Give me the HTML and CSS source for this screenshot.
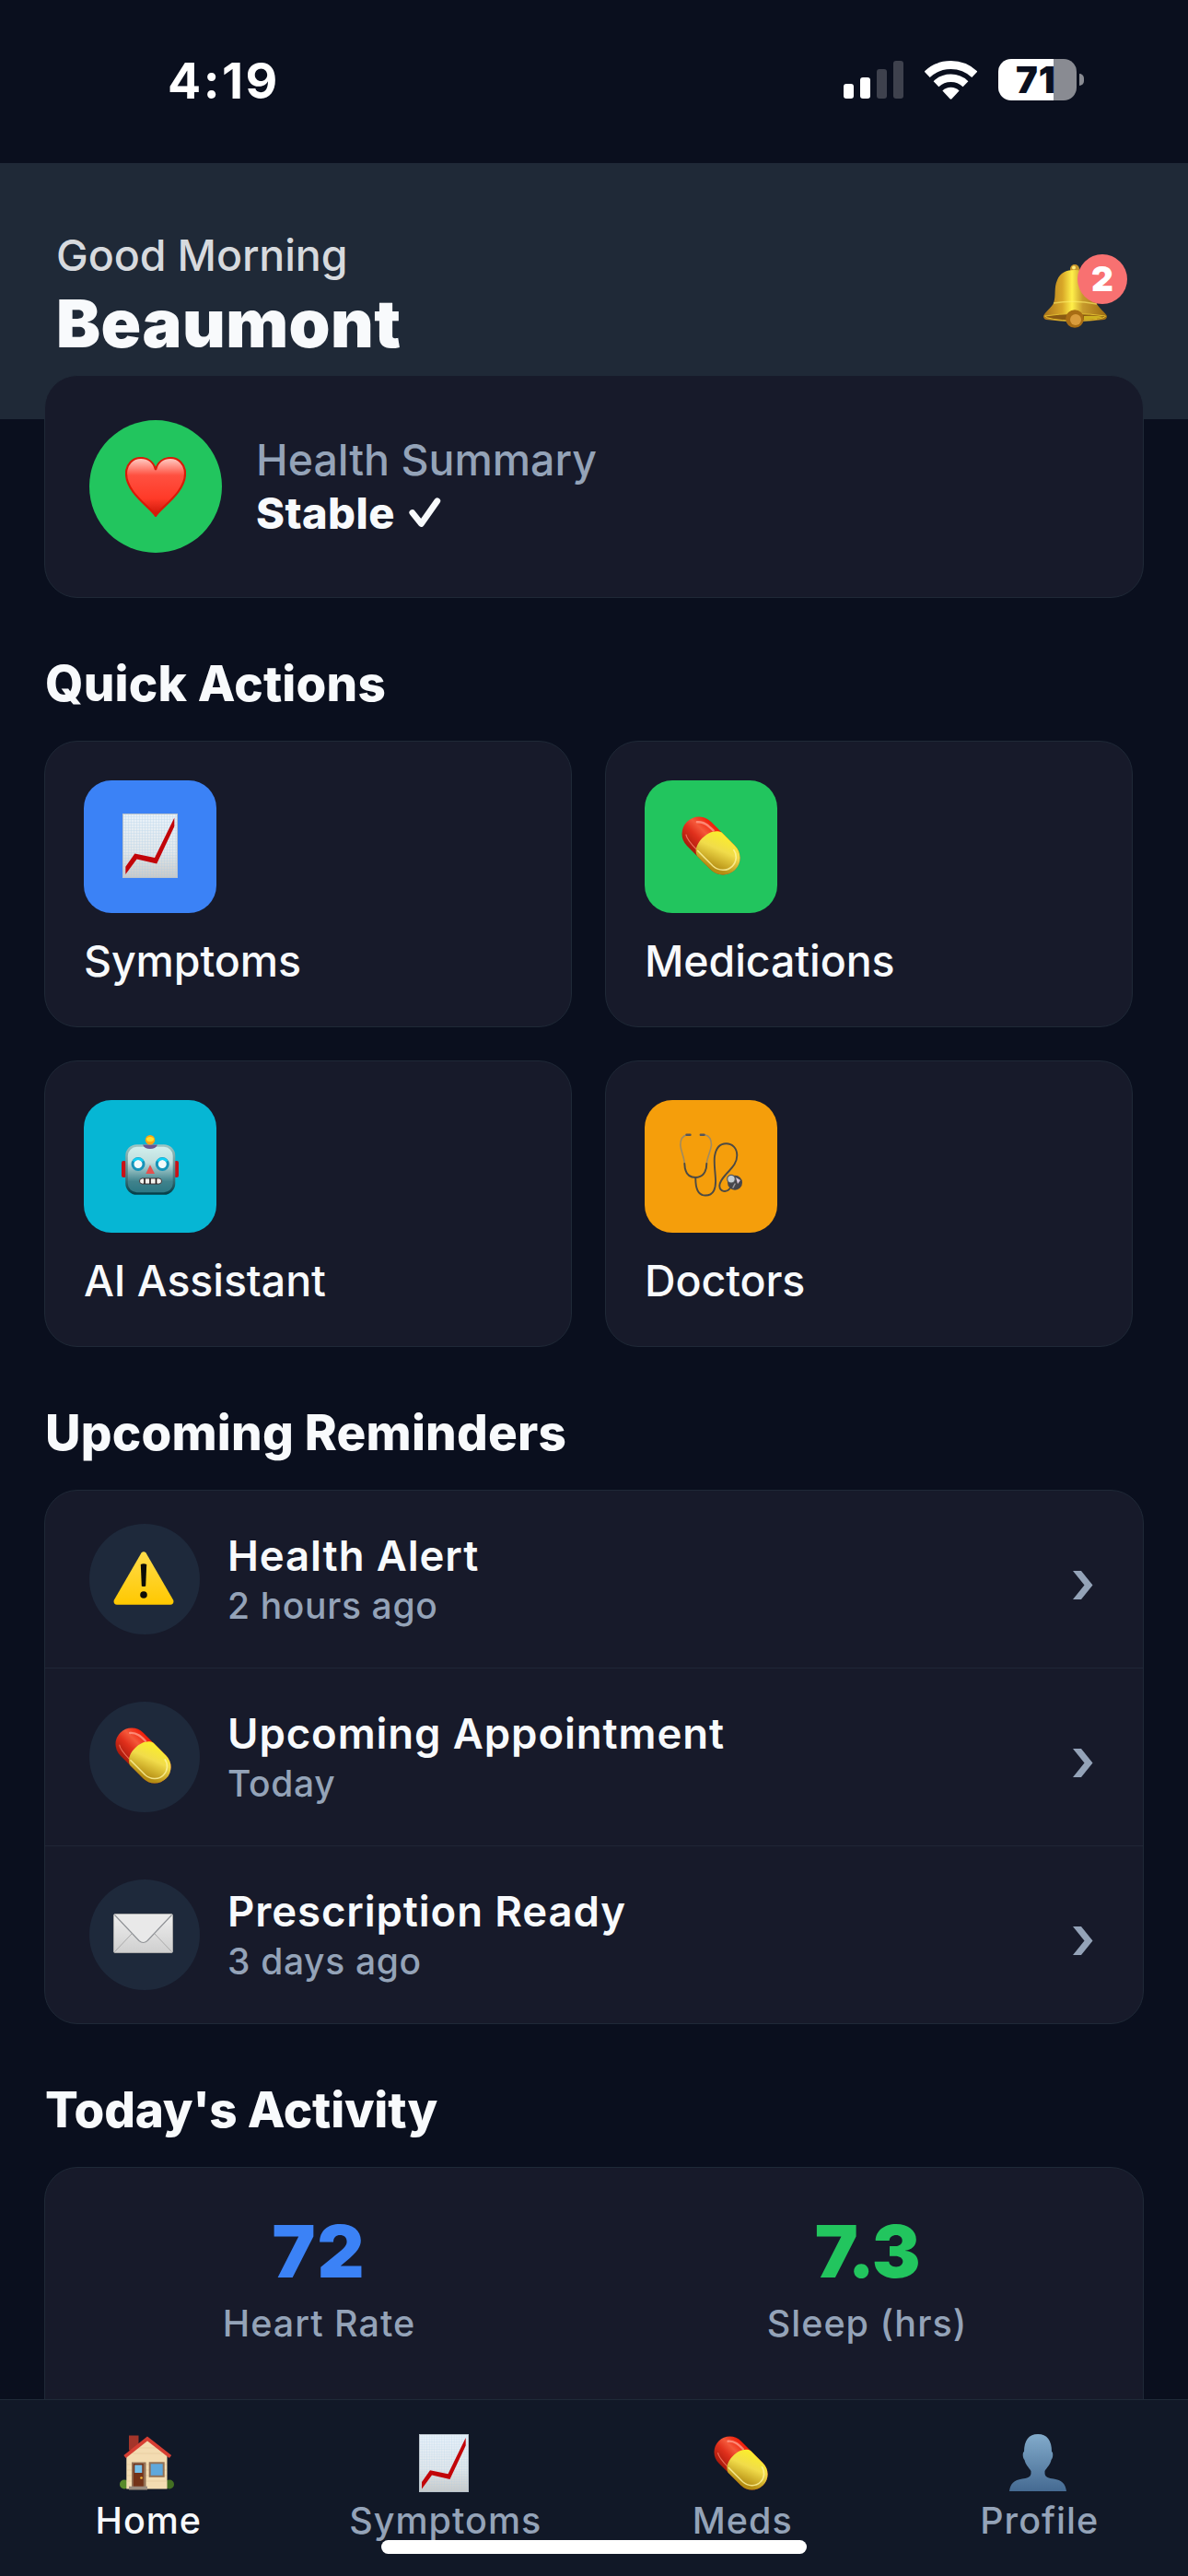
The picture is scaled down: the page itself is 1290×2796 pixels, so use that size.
FILE: index.html
```
<!DOCTYPE html>
<html lang="en">
  <head>
    <meta charset="UTF-8" />
    <meta name="viewport" content="width=device-width, initial-scale=1.0" />
    <title>Home</title>
    <link rel="stylesheet" href="styles.css">
  </head>
  <body>
    <!-- shared icons -->
    <svg class="defs" width="0" height="0">
      <defs>
        <linearGradient id="red" x1="0" y1="0" x2="0" y2="1">
          <stop offset="0" stop-color="#f01c08" />
          <stop offset="0.35" stop-color="#f4583a" />
          <stop offset="0.6" stop-color="#e0301c" />
          <stop offset="1" stop-color="#a81a0c" />
        </linearGradient>
        <linearGradient id="yellow" x1="0" y1="0" x2="0.5" y2="1">
          <stop offset="0" stop-color="#fdf225" />
          <stop offset="0.5" stop-color="#f1dc4a" />
          <stop offset="1" stop-color="#b48c12" />
        </linearGradient>
        <linearGradient id="paper" x1="0" y1="0" x2="0" y2="1">
          <stop offset="0" stop-color="#e9f2fa" />
          <stop offset="0.6" stop-color="#e2e7ea" />
          <stop offset="1" stop-color="#c9c9c7" />
        </linearGradient>
        <pattern id="lines" width="2.7" height="2.7" patternUnits="userSpaceOnUse">
          <path d="M0 0H2.7M0 0V2.7" stroke="#a8cbe6" stroke-width="0.7" />
        </pattern>
      </defs>
      <symbol id="pill" viewBox="0 0 64 64">
        <g transform="translate(32 32) rotate(45) translate(-36.9 -18.5)">
          <rect width="73.8" height="37" rx="18.5" fill="url(#red)" />
          <path d="M8 11C13 5 20 5 27 5" stroke="#ff9b88" stroke-width="2.5" stroke-linecap="round" fill="none" opacity="0.8" />
          <path d="M9 29C13 32 20 32.5 30 32.5" stroke="#ff9078" stroke-width="1.2" fill="none" opacity="0.7" />
          <path d="M35 0C21 4 21 33 34 37H55.3A18.5 18.5 0 0 0 55.3 0Z" fill="url(#yellow)" />
          <path d="M30 32.5H54C62 32 69 26 69 18C69 11 64 5 57 4" stroke="#fff5a0" stroke-width="1.6" fill="none" opacity="0.8" />
        </g>
      </symbol>
      <symbol id="chart" viewBox="0 0 54 63">
        <rect width="54" height="63" fill="url(#paper)" />
        <rect width="54" height="63" fill="url(#lines)" opacity="0.6" />
        <rect x="0.5" y="0.5" width="53" height="62" fill="none" stroke="#b9c3cc" />
        <path d="M3 52L12 39.2L31.5 43.3L50.7 4V12.5L33.5 49L14 44.5L3 59.5Z" fill="#c20409" />
      </symbol>
    </svg>

    <div class="statusbar">
      <span class="time">4:19</span>
      <div class="status-icons">
        <svg width="65" height="41" viewBox="0 0 65 41">
          <rect y="25" width="11" height="16" rx="3" fill="#fff" />
          <rect x="18" y="18" width="11" height="23" rx="3" fill="#fff" />
          <rect x="36" y="9" width="11" height="32" rx="3" fill="#3e414d" />
          <rect x="54" width="11" height="41" rx="3" fill="#3e414d" />
        </svg>
        <svg width="57" height="42" viewBox="0 0 57 42">
          <path d="M2.7 14.8A37.5 37.5 0 0 1 54.3 14.8" stroke="#fff" stroke-width="8.8" fill="none" />
          <path d="M12.5 25.2A23.2 23.2 0 0 1 44.5 25.2" stroke="#fff" stroke-width="8.4" fill="none" />
          <path d="M19.4 32.4A13.3 13.3 0 0 1 37.6 32.4L29.5 41.3Q28.5 42.2 27.5 41.3Z" fill="#fff" />
        </svg>
        <div class="battery">
          <span class="level">71</span>
          <i class="nub"></i>
        </div>
      </div>
    </div>

    <header>
      <div>
        <p class="greeting">Good Morning</p>
        <h1>Beaumont</h1>
      </div>
      <div class="bell">
        <svg width="69" height="69" viewBox="0 0 69 69">
          <defs>
            <linearGradient id="gold">
              <stop offset="0" stop-color="#a8711a" />
              <stop offset="0.3" stop-color="#d9a828" />
              <stop offset="0.45" stop-color="#fff04a" />
              <stop offset="0.62" stop-color="#c79a2c" />
              <stop offset="1" stop-color="#9c6a10" />
            </linearGradient>
          </defs>
          <circle cx="34" cy="5" r="5" fill="#c9962a" />
          <circle cx="33" cy="3.5" r="2" fill="#ffeb7a" />
          <path d="M34 6C43 6 52 9 54 18C56 27 53 35 58 43C61 48 67 52 69 56Q69 59 66 60Q34 64 3 60Q0 59 0 56C2 51 9 47 11 42C14 34 11 26 15 17C18 9 25 6 34 6Z" fill="url(#gold)" />
          <path d="M11 42Q34 38 58 43" stroke="#fff06a" stroke-width="1.5" fill="none" opacity="0.6" />
          <path d="M1.5 56Q34 51 67.5 56Q66 60 34 61.5Q4 60 1.5 56Z" fill="#8a5a12" stroke="#e0bb30" stroke-width="1" />
          <path d="M44 56Q58 55 65 57Q58 60 44 60Z" fill="#cdb020" />
          <circle cx="34" cy="59" r="9.8" fill="#a86d14" />
          <circle cx="35" cy="60" r="6" fill="#d99c3c" />
        </svg>
        <span class="badge">2</span>
      </div>
    </header>

    <main>
      <section class="card summary">
        <div class="heart">
          <svg width="66" height="65" viewBox="0 0 66 65">
            <defs>
              <linearGradient id="shine" x1="0" y1="0" x2="0" y2="1">
                <stop offset="0" stop-color="#ffd0c8" />
                <stop offset="0.3" stop-color="#ff5040" />
                <stop offset="0.7" stop-color="#ff3a28" />
                <stop offset="1" stop-color="#c81406" />
              </linearGradient>
            </defs>
            <path d="M33 64C28 55 1 39 1 18C1 8 8 1 17 1C25 1 31 6 33 14C35 6 41 1 49 1C58 1 65 8 65 18C65 39 38 55 33 64Z" fill="url(#shine)" stroke="#d81b08" stroke-width="2.2" />
          </svg>
        </div>
        <div>
          <p class="label">Health Summary</p>
          <p class="value">Stable
            <svg width="35" height="33" viewBox="0 0 35 33">
              <path d="M3.8 16.5L13.4 28.5L30.8 3.8" fill="none" stroke="#f8fafc" stroke-width="6.8" stroke-linecap="round" stroke-linejoin="round" />
            </svg>
          </p>
        </div>
      </section>

      <h2>Quick Actions</h2>
      <section class="actions">
        <div class="card action">
          <div class="tile blue"><svg width="60" height="70"><use href="#chart" /></svg></div>
          <p>Symptoms</p>
        </div>
        <div class="card action">
          <div class="tile green"><svg width="64" height="64"><use href="#pill" /></svg></div>
          <p>Medications</p>
        </div>
        <div class="card action">
          <div class="tile cyan">
            <svg width="62" height="65" viewBox="0 0 62 65">
              <defs>
                <linearGradient id="metal" x1="0" y1="0" x2="0" y2="1">
                  <stop offset="0" stop-color="#d3f0ee" />
                  <stop offset="0.35" stop-color="#bfdedd" />
                  <stop offset="0.75" stop-color="#3f828c" />
                  <stop offset="1" stop-color="#2b7682" />
                </linearGradient>
                <linearGradient id="rim" x1="0" y1="0" x2="0" y2="1">
                  <stop offset="0" stop-color="#9dc4c2" />
                  <stop offset="0.6" stop-color="#4d7f84" />
                  <stop offset="1" stop-color="#06404a" />
                </linearGradient>
              </defs>
              <rect y="28" width="5" height="18" rx="2" fill="#c81218" />
              <rect x="57" y="28" width="5" height="18" rx="2" fill="#c81218" />
              <rect x="5.5" y="11.5" width="51.5" height="52" rx="11" fill="url(#metal)" stroke="url(#rim)" stroke-width="2.6" />
              <path d="M23 10.5H39Q37 15 31 15Q25 15 23 10.5Z" fill="#6b5590" />
              <circle cx="31" cy="5.2" r="5.2" fill="#ffa412" />
              <ellipse cx="31" cy="4.6" rx="4" ry="2.6" fill="#ffdf2e" />
              <circle cx="18" cy="31.5" r="6" fill="#f4fbfb" stroke="#1793b8" stroke-width="3" />
              <circle cx="44.3" cy="31.5" r="6" fill="#f4fbfb" stroke="#1793b8" stroke-width="3" />
              <path d="M13 28.5A6 6 0 0 1 23 28.5M39.3 28.5A6 6 0 0 1 49.3 28.5" stroke="#0fd0f5" stroke-width="2.4" fill="none" />
              <path d="M31 32.3L36 42H26.3Z" fill="#e4504f" />
              <rect x="19.5" y="47" width="24" height="6" rx="3" fill="#f3f3ee" stroke="#38282a" stroke-width="0.9" />
              <path d="M25 47V53M31 47V53M37.5 47V53" stroke="#201616" stroke-width="1.6" />
            </svg>
          </div>
          <p>AI Assistant</p>
        </div>
        <div class="card action">
          <div class="tile orange">
            <svg width="68" height="69" viewBox="0 0 68 69" fill="none" stroke-linecap="round">
              <path d="M8 1.8C2 3 0.8 8 0.8 13C1.5 20 5 26 5.3 33" stroke="#a08a60" stroke-width="1.6" />
              <path d="M27.5 1.8C33 3 34.5 8 34.5 13C33.5 20 30 26 29.3 33" stroke="#a08a60" stroke-width="1.6" />
              <path d="M7.5 1.7H11.5M22.8 1.7H26.5" stroke="#55565a" stroke-width="2.4" />
              <path d="M5.3 33C5.5 43 10 48 17.3 48C25 48 29.3 42 29.3 33" stroke="#4c4a45" stroke-width="1.9" />
              <path d="M17.3 48C17 60 20 67.5 28 67.5C37 67.5 39.5 60 39 50C38.5 40 37 32 38 25C39.5 16 44 11.3 50.5 11.3C57 11.3 62.3 16 62.3 24C62.3 34 55 39 50 45C46 49.5 43.3 53 43.3 57C43.5 64 51 64.5 54.5 60" stroke="#4c4a45" stroke-width="1.9" />
              <circle cx="60" cy="53.7" r="8" fill="#46464a" />
              <path d="M61 48L66 51L63 55Z" fill="#d8c8d8" />
              <circle cx="56" cy="49.7" r="4.3" fill="#c4ccd0" stroke="#55585c" stroke-width="1.2" />
              <path d="M58 59L60 55" stroke="#9a9a9e" stroke-width="1.5" />
            </svg>
          </div>
          <p>Doctors</p>
        </div>
      </section>

      <h2>Upcoming Reminders</h2>
      <section class="card list">
        <div class="row">
          <div class="dot">
            <svg width="66" height="58" viewBox="0 0 66 58">
              <defs>
                <linearGradient id="warn" x1="0" y1="0" x2="0" y2="1">
                  <stop offset="0" stop-color="#ffdc4a" />
                  <stop offset="1" stop-color="#ffc800" />
                </linearGradient>
              </defs>
              <path d="M30.5 1.5Q33 -1 35.5 1.5L65.3 53Q66 57.5 62 57.7H4Q0 57.5 0.7 53Z" fill="url(#warn)" />
              <path d="M29.8 14Q33 12.5 36.2 14L35.2 37.5Q33 38.5 30.8 37.5Z" fill="#0c0c08" />
              <circle cx="33" cy="47" r="3.8" fill="#0c0c08" />
            </svg>
          </div>
          <div class="text">
            <h3>Health Alert</h3>
            <p>2 hours ago</p>
          </div>
          <svg class="chevron" width="22" height="31" viewBox="0 0 22 31"><path d="M0 0H9L21.5 15.5L9 31H0L12.5 15.5Z" fill="#94a3b8" /></svg>
        </div>
        <div class="row">
          <div class="dot"><svg width="61" height="61"><use href="#pill" /></svg></div>
          <div class="text">
            <h3>Upcoming Appointment</h3>
            <p>Today</p>
          </div>
          <svg class="chevron" width="22" height="31" viewBox="0 0 22 31"><path d="M0 0H9L21.5 15.5L9 31H0L12.5 15.5Z" fill="#94a3b8" /></svg>
        </div>
        <div class="row">
          <div class="dot">
            <svg width="65" height="43" viewBox="0 0 65 43">
              <defs>
                <linearGradient id="mail" x1="0" y1="0" x2="0" y2="1">
                  <stop offset="0" stop-color="#efefef" />
                  <stop offset="1" stop-color="#cfcfcf" />
                </linearGradient>
              </defs>
              <rect x="0.5" y="0.5" width="64" height="42" rx="1.5" fill="url(#mail)" stroke="#a9a9a9" />
              <path d="M1.5 41.5L20 22M63.5 41.5L45 22" stroke="#aaaaaa" stroke-width="1" />
              <path d="M1.5 1.5L28 29.5Q32.5 33.5 37 29.5L63.5 1.5" fill="#e9e9e9" stroke="#8f9296" stroke-width="1.1" />
            </svg>
          </div>
          <div class="text">
            <h3>Prescription Ready</h3>
            <p>3 days ago</p>
          </div>
          <svg class="chevron" width="22" height="31" viewBox="0 0 22 31"><path d="M0 0H9L21.5 15.5L9 31H0L12.5 15.5Z" fill="#94a3b8" /></svg>
        </div>
      </section>

      <h2 class="tight">Today's Activity</h2>
      <section class="card activity">
        <div class="stat">
          <strong class="heartrate">72</strong>
          <span>Heart Rate</span>
        </div>
        <div class="stat">
          <strong class="sleep">7.3</strong>
          <span>Sleep (hrs)</span>
        </div>
      </section>
    </main>

    <nav>
      <a class="tab valgt">
        <svg width="59" height="60" viewBox="0 0 59 60">
          <circle cx="5" cy="53.5" r="5" fill="#588a2c" />
          <circle cx="54" cy="53.5" r="5" fill="#436f22" />
          <rect x="10" y="0.5" width="10.5" height="16" fill="#a4352a" />
          <path d="M7.3 21L30 5L51.5 21V58.5H7.3Z" fill="#f3dcb2" />
          <path d="M8 32H51M8 38H51M8 44H51M8 50H51M14 20H46M20 14H40" stroke="#e3c898" stroke-width="0.6" />
          <path d="M5.5 23.5L30 4L55 23.5" fill="none" stroke="#d63e33" stroke-width="3.8" />
          <rect x="13" y="29.5" width="15.5" height="27" fill="#927156" />
          <rect x="14.8" y="31" width="11" height="25" fill="#743319" />
          <rect x="16.3" y="32.5" width="8" height="8.5" fill="#77c0ea" />
          <circle cx="23.5" cy="46.5" r="1.3" fill="#f4b93a" />
          <rect x="32.7" y="30.3" width="15" height="14.5" fill="#5fa8dc" stroke="#927156" stroke-width="2" />
          <rect x="10" y="55.7" width="20" height="3.8" fill="#9a8c80" />
        </svg>
        <span>Home</span>
      </a>
      <a class="tab">
        <svg width="54" height="63"><use href="#chart" /></svg>
        <span>Symptoms</span>
      </a>
      <a class="tab">
        <svg width="59" height="59"><use href="#pill" /></svg>
        <span>Meds</span>
      </a>
      <a class="tab">
        <svg width="62" height="62" viewBox="0 0 62 62">
          <defs>
            <linearGradient id="person" x1="0" y1="0" x2="0" y2="1">
              <stop offset="0" stop-color="#82abcb" />
              <stop offset="1" stop-color="#456a92" />
            </linearGradient>
          </defs>
          <path d="M31 0C41 0 46 7 46 19C48 20 47.5 26 45.5 28C44.5 33 41 36 38.5 40V43C39 47 43 48 48 48.5C57 50 61 54 62 62H0C1 54 5 50 14 48.5C19 48 23 47 23.5 43V40C21 36 17.5 33 16.5 28C14.5 26 14 20 16 19C16 7 21 0 31 0Z" fill="url(#person)" />
        </svg>
        <span>Profile</span>
      </a>
      <i class="home-indicator"></i>
    </nav>
  </body>
</html>
```

FILE: styles.css
```
* {
  box-sizing: border-box;
  margin: 0;
  padding: 0;
}

body {
  display: flex;
  flex-direction: column;
  width: 1290px;
  height: 2796px;
  overflow: hidden;
  background-color: #0a0f1e;
  color: #f8fafc;
  font-family: Inter, "Liberation Sans", sans-serif;
}

svg {
  display: block;
  flex-shrink: 0;
}

.defs {
  position: absolute;
}

/* status bar */
.statusbar {
  display: flex;
  justify-content: space-between;
  align-items: flex-start;
  flex-shrink: 0;
  height: 177px;
  padding: 57px 121px 0 182px;
  color: #fff;
}

.time {
  font-size: 53.5px;
  font-weight: 700;
  line-height: 62px;
  letter-spacing: 2.5px;
}

.status-icons {
  display: flex;
  align-items: center;
  gap: 23px;
  padding-top: 7px;
}

.battery {
  position: relative;
  width: 85px;
  height: 45px;
  border-radius: 14px;
  background: linear-gradient(to right, #fff 60px, #898b92 60px);
}

.level {
  display: block;
  padding-left: 19px;
  color: #0a0f1e;
  font-size: 40px;
  font-weight: 900;
  line-height: 45px;
  letter-spacing: 1px;
}

.nub {
  position: absolute;
  right: -8px;
  top: 16px;
  width: 5px;
  height: 13px;
  border-radius: 0 5px 5px 0;
  background-color: #898b92;
}

/* header */
header {
  display: flex;
  justify-content: space-between;
  flex-shrink: 0;
  height: 278px;
  padding: 72px 88px 0 61px;
  background-color: #1f2937;
}

.greeting {
  color: #d7dade;
  font-size: 46.5px;
  font-weight: 450;
  line-height: 57px;
  letter-spacing: -0.1px;
}

h1 {
  margin-top: 2px;
  font-size: 72px;
  font-weight: 900;
  line-height: 86px;
  letter-spacing: 0.5px;
}

.bell {
  position: relative;
  align-self: flex-start;
  margin-top: 38px;
}

.badge {
  position: absolute;
  top: -11px;
  right: -22px;
  width: 54px;
  height: 54px;
  border-radius: 50%;
  background-color: #f87171;
  color: #fff;
  font-size: 37px;
  font-weight: 900;
  line-height: 54px;
  text-align: center;
}

/* content */
main {
  flex: 1;
  min-height: 0;
  margin-top: -48px;
  padding: 0 48px;
  overflow: hidden;
}

.card {
  border: 1px solid #1f2937;
  border-radius: 36px;
  background-color: #171a2a;
}

.summary {
  display: flex;
  align-items: center;
  gap: 37px;
  height: 242px;
  padding: 0 48px;
}

.heart {
  display: flex;
  justify-content: center;
  align-items: center;
  width: 144px;
  height: 144px;
  border-radius: 50%;
  background-color: #22c55e;
}

.label {
  color: #94a3b8;
  font-size: 46.5px;
  font-weight: 500;
  line-height: 57px;
}

.value {
  display: flex;
  align-items: center;
  gap: 15px;
  font-size: 47px;
  font-weight: 800;
  line-height: 57px;
  letter-spacing: 0.4px;
}

h2 {
  margin: 62px 0 31px;
  padding-left: 1px;
  font-size: 53px;
  font-weight: 800;
  line-height: 62px;
  letter-spacing: 0.2px;
}

.tight {
  letter-spacing: -0.2px;
}

.actions {
  display: grid;
  grid-template-columns: 573px 573px;
  gap: 36px;
}

.action {
  height: 311px;
  padding: 42px;
}

.action p {
  margin-top: 23px;
  font-size: 46.5px;
  font-weight: 550;
  line-height: 58px;
  letter-spacing: -0.1px;
}

.tile {
  display: flex;
  justify-content: center;
  align-items: center;
  width: 144px;
  height: 144px;
  padding-bottom: 3px;
  border-radius: 30px;
}

.blue {
  background-color: #3b82f6;
}

.green {
  background-color: #22c55e;
}

.cyan {
  background-color: #06b6d4;
}

.orange {
  background-color: #f59e0b;
}

.row {
  display: flex;
  align-items: center;
  height: 193px;
  padding: 0 54px 0 48px;
  border-bottom: 1px solid #1f2636;
}

.row:last-child {
  height: 192px;
  border-bottom: none;
}

.dot {
  display: flex;
  justify-content: center;
  align-items: center;
  width: 120px;
  height: 120px;
  padding: 0 3px 3px 0;
  border-radius: 50%;
  background-color: #1e293b;
}

.text {
  flex: 1;
  padding-left: 30px;
}

h3 {
  font-size: 45.5px;
  font-weight: 600;
  line-height: 54px;
  letter-spacing: 0.9px;
}

.text p {
  margin-top: 3px;
  color: #94a3b8;
  font-size: 39px;
  font-weight: 500;
  line-height: 48px;
  letter-spacing: 0.65px;
}

.chevron {
  margin-top: 13px;
}

.activity {
  display: grid;
  grid-template-columns: 595px 595px;
  height: 400px;
  padding-top: 42px;
}

.stat {
  display: flex;
  flex-direction: column;
  align-items: center;
}

.stat strong {
  font-size: 79px;
  font-weight: 900;
  line-height: 96px;
}

.stat span {
  margin-top: 7px;
  color: #94a3b8;
  font-size: 39.5px;
  font-weight: 500;
  line-height: 48px;
  letter-spacing: 1px;
}

.heartrate {
  color: #3b82f6;
  letter-spacing: 2px;
}

.sleep {
  color: #22c55e;
  letter-spacing: -1.5px;
}

/* tab bar */
nav {
  position: relative;
  display: flex;
  flex-shrink: 0;
  height: 192px;
  border-top: 1px solid #1f2937;
  background-color: #111827;
}

.tab {
  display: flex;
  flex: 1;
  flex-direction: column;
  align-items: center;
  height: 155px;
  padding-top: 29px;
  color: #94a3b8;
}

.tab svg {
  margin: auto 3px auto 0;
}

.tab span {
  font-size: 39.5px;
  font-weight: 500;
  line-height: 48px;
  letter-spacing: 1px;
}

.valgt {
  color: #f8fafc;
}

.home-indicator {
  position: absolute;
  left: 414px;
  top: 152px;
  width: 462px;
  height: 15px;
  border-radius: 8px;
  background-color: #fff;
}
```
